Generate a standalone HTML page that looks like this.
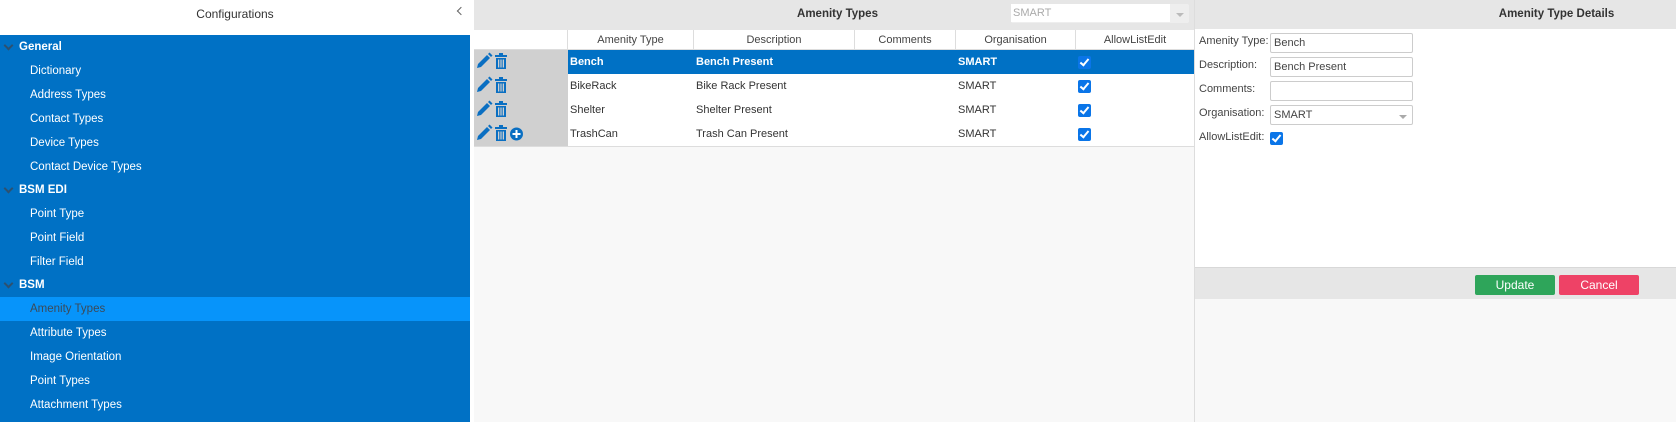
<!DOCTYPE html>
<html><head><meta charset="utf-8"><style>
*{box-sizing:border-box;margin:0;padding:0}
body{width:1676px;height:422px;overflow:hidden;background:#fff;font-family:"Liberation Sans",sans-serif;font-size:12px;color:#333;position:relative}
.abs{position:absolute}
#left{left:0;top:0;width:470px;height:422px;background:#0071c5}
#lhead{left:0;top:0;width:470px;height:35px;background:#fff;text-align:center;line-height:29px;font-size:12px;color:#333}
.item{position:absolute;left:0;width:470px;height:24px;line-height:24px;color:#fff;padding-left:30px;font-size:11.5px}
.cat{padding-left:19px;font-weight:bold}
.cat:before{content:"";position:absolute;left:5px;top:7px;width:5px;height:5px;border-right:2px solid #2d5170;border-bottom:2px solid #2d5170;transform:rotate(45deg)}
.sel{background:#0794fa;color:#3c4a58}
#mid{left:474px;top:0;width:720px;height:422px;background:#f8f8f8}
#mhead{left:474px;top:0;width:720px;height:30px;background:#e6e6e6}
.th{position:absolute;top:30px;height:20px;line-height:20px;text-align:center;background:#fff;border-right:1px solid #ddd;border-bottom:1px solid #ddd;color:#444;font-size:11px}
.row{position:absolute;left:568px;width:626px;height:24px;background:#fff}
.cell{position:absolute;top:0;line-height:24px;font-size:11px;color:#333}
.cb{position:absolute;top:6px;left:1078px;width:13px;height:13px;background:#0a75e8;border-radius:2px}
.cb:after{content:"";position:absolute;left:4px;top:1px;width:3px;height:7px;border-right:2px solid #fff;border-bottom:2px solid #fff;transform:rotate(40deg)}
#right{left:1194px;top:0;width:482px;height:422px;background:#f8f8f8;border-left:1px solid #ddd}
.lab{position:absolute;left:1199px;font-size:11px;color:#444}
.inp{position:absolute;left:1270px;width:143px;height:20px;border:1px solid #ccc;border-radius:2px;background:#fff;font-size:11px;line-height:18px;padding-left:3px;color:#444}
.btn{position:absolute;top:275px;width:80px;height:20px;border-radius:2px;color:#fff;text-align:center;line-height:20px;font-size:12px}
</style></head><body>
<div id="left" class="abs"></div>
<div id="lhead" class="abs">Configurations</div>
<div class="abs" style="left:458px;top:8px;width:6px;height:6px;border-left:1.5px solid #666;border-bottom:1.5px solid #666;transform:rotate(45deg)"></div>
<div class="item cat" style="top:35px">General</div>
<div class="item" style="top:59px">Dictionary</div>
<div class="item" style="top:83px">Address Types</div>
<div class="item" style="top:107px">Contact Types</div>
<div class="item" style="top:131px">Device Types</div>
<div class="item" style="top:155px">Contact Device Types</div>
<div class="item cat" style="top:178px">BSM EDI</div>
<div class="item" style="top:202px">Point Type</div>
<div class="item" style="top:226px">Point Field</div>
<div class="item" style="top:250px">Filter Field</div>
<div class="item cat" style="top:273px">BSM</div>
<div class="item sel" style="top:297px">Amenity Types</div>
<div class="item" style="top:321px">Attribute Types</div>
<div class="item" style="top:345px">Image Orientation</div>
<div class="item" style="top:369px">Point Types</div>
<div class="item" style="top:393px">Attachment Types</div>

<div id="mid" class="abs"></div>
<div id="mhead" class="abs"></div>
<div class="abs" style="left:760px;top:0;width:155px;text-align:center;line-height:29px;font-weight:bold;color:#333;font-size:11.5px">Amenity Types</div>
<div class="abs" style="left:1011px;top:4px;width:178px;height:19px;background:#eee;border-radius:2px"></div>
<div class="abs" style="left:1011px;top:4px;width:159px;height:18px;background:#fff;color:#aaa;line-height:18px;padding-left:2px;font-size:11px">SMART</div>
<div class="abs" style="left:1176px;top:13px;border-left:4px solid transparent;border-right:4px solid transparent;border-top:4px solid #bbb"></div>

<div class="th" style="left:474px;width:94px"></div>
<div class="th" style="left:568px;width:126px">Amenity Type</div>
<div class="th" style="left:694px;width:161px">Description</div>
<div class="th" style="left:855px;width:101px">Comments</div>
<div class="th" style="left:956px;width:120px">Organisation</div>
<div class="th" style="left:1076px;width:118px;border-right:none">AllowListEdit</div>
<div class="abs" style="left:474px;top:50px;width:94px;height:96px;background:#d0d0d0"></div>
<div class="abs" style="left:474px;top:146px;width:720px;height:1px;background:#ddd"></div>

<div class="row" style="top:50px;background:#0071c5"></div>
<div class="row" style="top:74px"></div>
<div class="row" style="top:98px"></div>
<div class="row" style="top:122px"></div>

<div style="position:absolute;left:0;top:50px;width:1194px;height:24px;font-weight:bold">
<div class="cell" style="left:570px;color:#fff">Bench</div><div class="cell" style="left:696px;color:#fff">Bench Present</div><div class="cell" style="left:958px;color:#fff">SMART</div><div class="cb"></div></div>
<div style="position:absolute;left:0;top:74px;width:1194px;height:24px">
<div class="cell" style="left:570px">BikeRack</div><div class="cell" style="left:696px">Bike Rack Present</div><div class="cell" style="left:958px">SMART</div><div class="cb"></div></div>
<div style="position:absolute;left:0;top:98px;width:1194px;height:24px">
<div class="cell" style="left:570px">Shelter</div><div class="cell" style="left:696px">Shelter Present</div><div class="cell" style="left:958px">SMART</div><div class="cb"></div></div>
<div style="position:absolute;left:0;top:122px;width:1194px;height:24px">
<div class="cell" style="left:570px">TrashCan</div><div class="cell" style="left:696px">Trash Can Present</div><div class="cell" style="left:958px">SMART</div><div class="cb"></div></div>

<svg class="abs" style="left:474px;top:50px" width="94" height="96" viewBox="0 0 94 96">
<defs>
<g id="pen"><path d="M3 18 L4 14 L13 5 L16 8 L7 17 Z" fill="#0a6fc2"/><path d="M14 4 L15.5 2.5 L18.5 5.5 L17 7 Z" fill="#0a6fc2"/></g>
<g id="tr"><rect x="21" y="5" width="12" height="2" fill="#0a6fc2"/><rect x="25" y="3" width="4" height="2" fill="#0a6fc2"/><path d="M22 8 H32 V19 H22 Z M24 9.5 V17.5 H25.3 V9.5 Z M26.4 9.5 V17.5 H27.6 V9.5 Z M28.7 9.5 V17.5 H30 V9.5 Z" fill="#0a6fc2" fill-rule="evenodd"/></g>
</defs>
<use href="#pen" y="0"/><use href="#tr" y="0"/>
<use href="#pen" y="24"/><use href="#tr" y="24"/>
<use href="#pen" y="48"/><use href="#tr" y="48"/>
<use href="#pen" y="72"/><use href="#tr" y="72"/>
<circle cx="42.5" cy="84" r="6.5" fill="#0a6fc2"/><rect x="38.5" y="83" width="8" height="2" fill="#fff"/><rect x="41.5" y="80" width="2" height="8" fill="#fff"/>
</svg>

<div id="right" class="abs"></div>
<div class="abs" style="left:1195px;top:0;width:481px;height:29px;background:#e6e6e6;text-align:center;line-height:29px;font-weight:bold;color:#333;padding-left:242px;font-size:11.5px">Amenity Type Details</div>
<div class="abs" style="left:1195px;top:29px;width:481px;height:239px;background:#fff;border-bottom:1px solid #d8d8d8"></div>
<div class="abs" style="left:1195px;top:268px;width:481px;height:31px;background:#e6e6e6"></div>
<div class="lab" style="top:35px">Amenity Type:</div>
<div class="lab" style="top:59px">Description:</div>
<div class="lab" style="top:83px">Comments:</div>
<div class="lab" style="top:107px">Organisation:</div>
<div class="lab" style="top:131px">AllowListEdit:</div>
<div class="inp" style="top:33px">Bench</div>
<div class="inp" style="top:57px">Bench Present</div>
<div class="inp" style="top:81px"></div>
<div class="inp" style="top:105px">SMART</div>
<div class="abs" style="left:1399px;top:115px;border-left:4px solid transparent;border-right:4px solid transparent;border-top:4px solid #aaa"></div>
<div class="cb" style="left:1270px;top:132px"></div>
<div class="btn" style="left:1475px;background:#2ea55a">Update</div>
<div class="btn" style="left:1559px;background:#ee4266">Cancel</div>
</body></html>
